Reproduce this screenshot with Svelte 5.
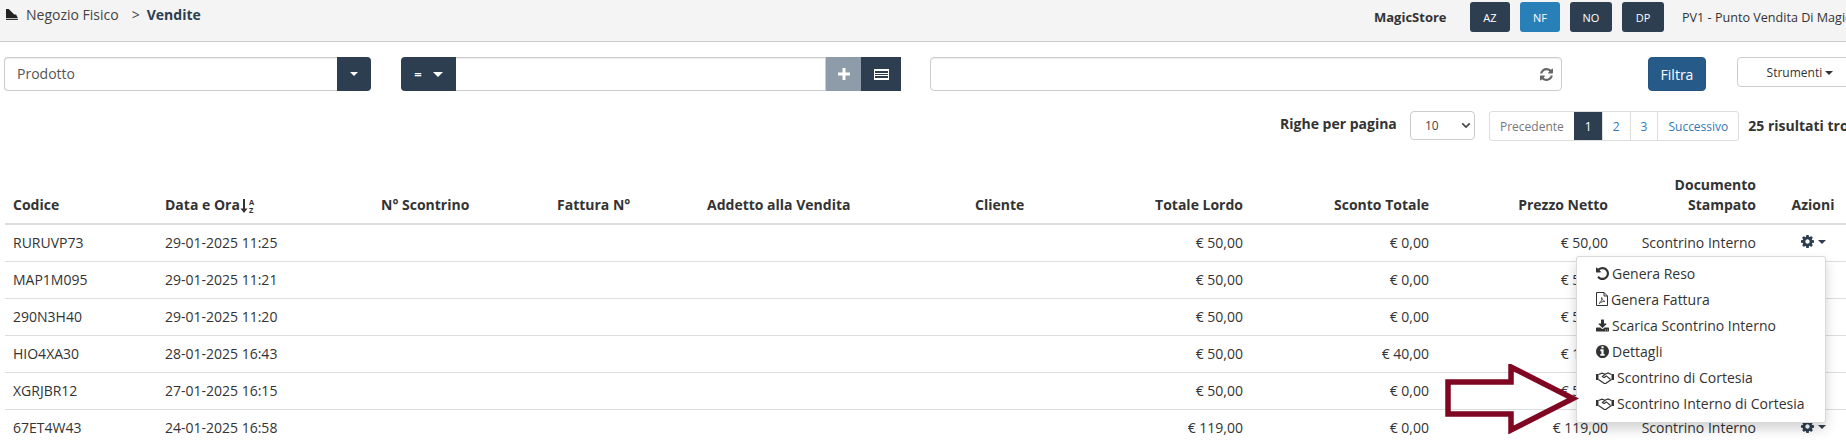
<script>
  const rows = [
    { code: 'RURUVP73', date: '29-01-2025 11:25', gross: '€ 50,00', discount: '€ 0,00', net: '€ 50,00' },
    { code: 'MAP1M095', date: '29-01-2025 11:21', gross: '€ 50,00', discount: '€ 0,00', net: '€ 50,00' },
    { code: '290N3H40', date: '29-01-2025 11:20', gross: '€ 50,00', discount: '€ 0,00', net: '€ 50,00' },
    { code: 'HIO4XA30', date: '28-01-2025 16:43', gross: '€ 50,00', discount: '€ 40,00', net: '€ 10,00' },
    { code: 'XGRJBR12', date: '27-01-2025 16:15', gross: '€ 50,00', discount: '€ 0,00', net: '€ 50,00' },
    { code: '67ET4W43', date: '24-01-2025 16:58', gross: '€ 119,00', discount: '€ 0,00', net: '€ 119,00' }
  ];

  const stores = [
    { label: 'AZ', active: false },
    { label: 'NF', active: true },
    { label: 'NO', active: false },
    { label: 'DP', active: false }
  ];
</script>

{#snippet handshake()}
  <svg class="mi wide" viewBox="0 0 18 13">
    <path d="M0 3h2.500v6H0zM15.500 3H18v6h-2.500z" fill="#333" stroke="none"/>
    <path d="M2.500 3.500 6 2.200l3 1 3-1.200 3.500 1.500M2.500 8.500l5.500 3.700q1 .7 2 0l5.500-3.700M9.500 3 6.300 5.500q1.200 1.700 3 .2l1-.8 4 3.300" fill="none" stroke="#333" stroke-width="1.200"/>
  </svg>
{/snippet}

<div class="page">
  <header class="topbar">
    <div class="crumbs">
      <svg class="crumb-icon" viewBox="0 0 14 12"><path d="M1 0h3l6 6h2l2 4H1z"/><rect x="1" y="11" width="13" height="1"/></svg>
      <span>Negozio Fisico</span>
      <span class="sep">&gt;</span>
      <strong>Vendite</strong>
    </div>
    <div class="stores">
      <strong class="shop">MagicStore</strong>
      {#each stores as store}
        <span class="store" class:active={store.active}>{store.label}</span>
      {/each}
      <span class="point">PV1 - Punto Vendita Di MagicStore</span>
    </div>
  </header>

  <section class="filters">
    <div class="group product">
      <span class="field">Prodotto</span>
      <span class="dark-btn caret-btn"><i class="caret"></i></span>
    </div>
    <div class="group value">
      <span class="dark-btn op"><b>=</b><i class="caret big"></i></span>
      <span class="field"></span>
      <span class="plus">
        <svg viewBox="0 0 12 12"><path d="M4.500 0h3v4.500H12v3H7.500V12h-3V7.500H0v-3h4.500z"/></svg>
      </span>
      <span class="dark-btn list">
        <svg viewBox="0 0 15 11"><rect width="15" height="11" fill="#fff"/><rect x="1" y="2" width="13" height="2" fill="#2c3e50"/><rect x="1" y="5" width="13" height="1" fill="#2c3e50"/><rect x="1" y="7" width="13" height="2" fill="#2c3e50"/></svg>
      </span>
    </div>
    <div class="search">
      <svg viewBox="0 0 1536 1536"><path d="M1511 928q0 5-1 7-64 268-268 434.500T764 1536q-146 0-282.500-55T238 1324l-129 129q-19 19-45 19t-45-19-19-45V960q0-26 19-45t45-19h448q26 0 45 19t19 45-19 45l-137 137q71 66 161 102t187 36q134 0 250-65t186-179q11-17 53-117 8-23 30-23h192q13 0 22.500 9.500t9.500 22.500zm25-800v448q0 26-19 45t-45 19h-448q-26 0-45-19t-19-45 19-45l138-138Q969 256 768 256q-134 0-250 65T332 500q-11 17-53 117-8 23-30 23H50q-13 0-22.500-9.500T18 608v-7q65-268 270-434.500T768 0q146 0 284 55.500T1297 212l130-129q19-19 45-19t45 19 19 45z"/></svg>
    </div>
    <button class="filter-btn">Filtra</button>
    <button class="tools-btn">Strumenti <i class="caret small"></i></button>
  </section>

  <section class="paging">
    <strong class="per-page">Righe per pagina</strong>
    <span class="page-size">10
      <svg viewBox="0 0 12 8"><path d="M1.500 1.500 6 6l4.500-4.500" fill="none" stroke="#444" stroke-width="2"/></svg>
    </span>
    <nav class="pager">
      <span class="prev">Precedente</span>
      <span class="current">1</span>
      <span>2</span>
      <span>3</span>
      <span>Successivo</span>
    </nav>
    <strong class="count">25 risultati trovati</strong>
  </section>

  <table>
    <colgroup>
      <col style="width:152px" /><col style="width:216px" /><col style="width:176px" /><col style="width:150px" />
      <col style="width:268px" /><col style="width:100px" /><col style="width:184px" /><col style="width:186px" />
      <col style="width:179px" /><col style="width:148px" /><col style="width:98px" />
    </colgroup>
    <thead>
      <tr>
        <th>Codice</th>
        <th>
          <span class="sorted">Data e Ora<svg viewBox="0 0 17 15"><path d="M3 1h2v9.500h2.500L4 15 .5 10.500H3z" fill="#333"/><text x="9" y="6.500" class="az">A</text><text x="9" y="14.500" class="az">Z</text></svg></span>
        </th>
        <th>N° Scontrino</th>
        <th>Fattura N°</th>
        <th>Addetto alla Vendita</th>
        <th>Cliente</th>
        <th class="num">Totale Lordo</th>
        <th class="num">Sconto Totale</th>
        <th class="num">Prezzo Netto</th>
        <th class="num">Documento<br />Stampato</th>
        <th class="center">Azioni</th>
      </tr>
    </thead>
    <tbody>
      {#each rows as row}
        <tr>
          <td>{row.code}</td>
          <td>{row.date}</td>
          <td></td>
          <td></td>
          <td></td>
          <td></td>
          <td class="num">{row.gross}</td>
          <td class="num">{row.discount}</td>
          <td class="num">{row.net}</td>
          <td class="num">Scontrino Interno</td>
          <td class="center">
            <span class="actions">
              <svg class="gear" viewBox="0 0 1536 1536"><path d="M1024 768q0-106-75-181t-181-75-181 75-75 181 75 181 181 75 181-75 75-181zm512-109v222q0 12-8 23t-20 13l-185 28q-19 54-39 91 35 50 107 138 10 12 10 25t-9 23q-27 37-99 108t-94 71q-12 0-26-9l-138-108q-44 23-91 38-16 136-29 186-7 28-36 28H657q-14 0-24.500-8.500T621 1506l-28-184q-49-16-90-37l-141 107q-10 9-25 9-14 0-25-11-126-114-165-168-7-10-7-23 0-12 8-23 15-21 51-66.500t54-70.500q-27-50-41-99L29 913q-13-2-21-12.500T0 877V655q0-12 8-23t19-13l186-28q14-46 39-92-40-57-107-138-10-12-10-24 0-10 9-23 26-36 98.500-107.500T337 135q13 0 26 10l138 107q44-23 91-38 16-136 29-186 7-28 36-28h222q14 0 24.500 8.500T915 30l28 184q49 16 90 37l142-107q9-9 24-9 13 0 25 10 129 119 165 170 7 8 7 22 0 12-8 23-15 21-51 66.500t-54 70.500q26 50 41 98l183 28q13 2 21 12.500t8 23.500z"/></svg>
              <i class="caret"></i>
            </span>
          </td>
        </tr>
      {/each}
    </tbody>
  </table>

  <ul class="menu">
    <li>
      <svg class="mi" viewBox="0 0 1536 1536"><path d="M1536 768q0 156-61 298t-164 245-245 164-298 61q-172 0-327-72.500T177 1259q-7-10-6.500-22.500T179 1216l137-138q10-9 25-9 16 2 23 12 73 95 179 147t225 52q104 0 198.500-40.500T1130 1130t109.500-163.500T1280 768t-40.500-198.500T1130 406 966.500 296.500 768 256q-98 0-188 35.500T420 393l137 138q31 30 14 69-17 40-59 40H64q-26 0-45-19T0 576V128q0-42 40-59 39-17 69 14l130 129Q346 111 483.500 55.500T768 0q156 0 298 61t245 164 164 245 61 298z"/></svg>
      Genera Reso
    </li>
    <li>
      <svg class="mi pdf" viewBox="0 0 12 14"><path d="M.5.500h7.500l3.500 3.500v9.500H.5z M8 .500v3.500h3.500" fill="none" stroke="#333" stroke-width="1"/><path d="M3 11.500c2-1 3-4 2.700-6 .5 2.500 1.500 3.500 3.300 4-2-.2-4 .5-6 2z" fill="none" stroke="#333" stroke-width=".8"/></svg>
      Genera Fattura
    </li>
    <li>
      <svg class="mi" viewBox="0 0 1664 1536"><path d="M1280 1344q0-26-19-45t-45-19-45 19-19 45 19 45 45 19 45-19 19-45zm256 0q0-26-19-45t-45-19-45 19-19 45 19 45 45 19 45-19 19-45zm128-224v320q0 40-28 68t-68 28H96q-40 0-68-28t-28-68v-320q0-40 28-68t68-28h465l135 136q58 56 136 56t136-56l136-136h464q40 0 68 28t28 68zm-325-569q17 41-14 70l-448 448q-18 19-45 19t-45-19L339 621q-31-29-14-70 17-39 59-39h256V64q0-26 19-45t45-19h256q26 0 45 19t19 45v448h256q42 0 59 39z"/></svg>
      Scarica Scontrino Interno
    </li>
    <li>
      <svg class="mi" viewBox="0 0 1536 1536"><path d="M1024 1248v-160q0-14-9-23t-23-9h-96V544q0-14-9-23t-23-9H544q-14 0-23 9t-9 23v160q0 14 9 23t23 9h96v320h-96q-14 0-23 9t-9 23v160q0 14 9 23t23 9h448q14 0 23-9t9-23zM896 352V192q0-14-9-23t-23-9H672q-14 0-23 9t-9 23v160q0 14 9 23t23 9h192q14 0 23-9t9-23zm640 416q0 209-103 385.500T1153.500 1433 768 1536t-385.500-103T103 1153.500 0 768t103-385.500T382.500 103 768 0t385.500 103T1433 382.500 1536 768z"/></svg>
      Dettagli
    </li>
    <li>
      {@render handshake()}
      Scontrino di Cortesia
    </li>
    <li>
      {@render handshake()}
      Scontrino Interno di Cortesia
    </li>
  </ul>

  <svg class="arrow" viewBox="0 0 134 70" width="134" height="70">
    <path d="M3 18H66V3L128 34.500 66 66V50H3Z" fill="none" stroke="#7f0722" stroke-width="5.500"/>
  </svg>
</div>

<style>
  :global(body) {
    margin: 0;
    overflow: hidden;
    background: #fff;
  }

  .page {
    position: relative;
    width: 1900px;
    height: 443px;
    overflow: hidden;
    font-family: "Open Sans", "Noto Sans", sans-serif;
    font-size: 13px;
    color: #333;
  }

  .topbar {
    box-sizing: border-box;
    height: 42px;
    background: #f4f4f4;
    border-bottom: 1px solid #ccc;
    display: flex;
    align-items: flex-start;
    padding-left: 5px;
  }

  .crumbs {
    display: flex;
    align-items: center;
    height: 29px;
    width: 1369px;
    color: #444;
    font-size: 14px;
  }

  .crumb-icon {
    width: 13px;
    height: 11px;
    fill: #222;
    margin-right: 8px;
  }

  .crumbs strong {
    color: #2c3e50;
  }

  .sep {
    margin: 0 7px 0 13px;
  }

  .stores {
    display: flex;
    align-items: center;
    height: 30px;
    padding-top: 2px;
  }

  .shop {
    width: 96px;
    color: #333;
  }

  .store {
    box-sizing: border-box;
    width: 40px;
    height: 30px;
    margin-right: 10px;
    background: #2c3e50;
    color: #fff;
    border-radius: 3px;
    display: flex;
    align-items: center;
    justify-content: center;
    font-size: 11px;
  }

  .store:nth-of-type(3),
  .store:nth-of-type(4) {
    width: 42px;
  }

  .store.active {
    background: #2980b9;
  }

  .point {
    margin-left: 8px;
    white-space: nowrap;
    font-size: 12.600px;
  }

  .filters {
    display: flex;
    align-items: flex-start;
    padding: 15px 0 0 4px;
    box-sizing: border-box;
    height: 69px;
  }

  .group {
    display: flex;
    height: 34px;
  }

  .field {
    box-sizing: border-box;
    flex: 1;
    height: 34px;
    line-height: 32px;
    padding-left: 12px;
    border: 1px solid #ccc;
    box-shadow: inset 0 1px 1px rgba(0, 0, 0, 0.075);
    color: #555;
    font-size: 14px;
  }

  .product {
    width: 367px;
  }

  .product .field {
    border-radius: 4px 0 0 4px;
    border-right: 0;
  }

  .dark-btn {
    background: #2c3e50;
    display: flex;
    align-items: center;
    justify-content: center;
  }

  .caret-btn {
    width: 34px;
    border-radius: 0 4px 4px 0;
  }

  .caret {
    display: inline-block;
    width: 0;
    height: 0;
    border-top: 4px solid #fff;
    border-left: 4px solid transparent;
    border-right: 4px solid transparent;
  }

  .caret.big {
    border-width: 5px 5px 0;
    margin-left: 11px;
  }

  .caret.small {
    border-top-color: #333;
    vertical-align: middle;
    border-width: 4px 4px 0;
  }

  .value {
    width: 500px;
    margin-left: 30px;
  }

  .op {
    width: 55px;
    border-radius: 4px 0 0 4px;
    color: #fff;
  }

  .value .field {
    padding: 0;
    border-left: 0;
  }

  .plus {
    width: 35px;
    background: #8e9ba8;
    display: flex;
    align-items: center;
    justify-content: center;
  }

  .plus svg {
    width: 12px;
    height: 12px;
    fill: #fff;
  }

  .list {
    width: 40px;
  }

  .list svg {
    width: 15px;
    height: 11px;
  }

  .search {
    box-sizing: border-box;
    width: 632px;
    height: 34px;
    margin-left: 29px;
    border: 1px solid #ccc;
    border-radius: 4px;
    box-shadow: inset 0 1px 1px rgba(0, 0, 0, 0.075);
    display: flex;
    align-items: center;
    justify-content: flex-end;
    padding-right: 8px;
  }

  .search svg {
    width: 13px;
    height: 13px;
    fill: #666;
  }

  .filter-btn {
    width: 58px;
    height: 34px;
    margin-left: 86px;
    background: #265a88;
    border: 1px solid #245580;
    border-radius: 4px;
    color: #fff;
    font: 14px "Open Sans", sans-serif;
    padding: 0;
  }

  .tools-btn {
    width: 130px;
    height: 30px;
    margin-left: 31px;
    background: #fff;
    border: 1px solid #ccc;
    border-radius: 4px;
    color: #333;
    font: 12px "Open Sans", sans-serif;
    padding: 0 4px 0 0;
  }

  .paging {
    display: flex;
    align-items: flex-start;
    height: 112px;
    box-sizing: border-box;
    padding-left: 1280px;
  }

  .per-page {
    width: 130px;
    line-height: 26px;
    font-size: 14px;
    white-space: nowrap;
  }

  .page-size {
    box-sizing: border-box;
    width: 65px;
    height: 29px;
    border: 1px solid #ccc;
    border-radius: 4px;
    padding-left: 14px;
    line-height: 29px;
    font-size: 12px;
    color: #444;
    display: flex;
    justify-content: space-between;
    align-items: center;
    padding-right: 3px;
  }

  .page-size svg {
    width: 10px;
    height: 7px;
  }

  .pager {
    display: flex;
    height: 30px;
    margin-left: 14px;
    border: 1px solid #ddd;
    border-radius: 3px;
    box-sizing: border-box;
    font-size: 12px;
    color: #337ab7;
  }

  .pager span {
    display: flex;
    align-items: center;
    padding: 0 10px;
    border-left: 1px solid #ddd;
  }

  .pager .prev {
    border-left: 0;
    color: #777;
  }

  .pager .current {
    background: #2c3e50;
    color: #fff;
    border-color: #2c3e50;
  }

  .count {
    margin-left: 9px;
    line-height: 30px;
    white-space: nowrap;
    font-size: 14px;
  }

  table {
    position: absolute;
    left: 5px;
    top: 175px;
    width: 1857px;
    table-layout: fixed;
    border-collapse: collapse;
    font-size: 14px;
  }

  th {
    height: 48px;
    padding: 0 8px 8px;
    box-sizing: border-box;
    vertical-align: bottom;
    text-align: left;
    line-height: 20px;
    border-bottom: 2px solid #ddd;
    color: #333;
    white-space: nowrap;
  }

  td {
    height: 37px;
    padding: 0 8px;
    box-sizing: border-box;
    border-bottom: 1px solid #ddd;
    white-space: nowrap;
  }

  .num {
    text-align: right;
  }

  .center {
    text-align: center;
  }

  .sorted {
    display: inline-flex;
    align-items: center;
  }

  .sorted svg {
    width: 17px;
    height: 15px;
  }

  .az {
    font-size: 7.500px;
    font-weight: 700;
    fill: #333;
  }

  .actions {
    display: inline-flex;
    align-items: center;
    gap: 4px;
  }

  .gear {
    width: 13px;
    height: 13px;
    fill: #2c3e50;
  }

  .actions .caret {
    border-top-color: #2c3e50;
  }

  .menu {
    position: absolute;
    left: 1576px;
    top: 256px;
    box-sizing: border-box;
    width: 250px;
    height: 167px;
    margin: 0;
    padding: 3px 0;
    list-style: none;
    background: #fff;
    border: 1px solid rgba(0, 0, 0, 0.15);
    border-radius: 3px;
    box-shadow: 0 6px 12px rgba(0, 0, 0, 0.175);
    font-size: 14px;
    color: #333;
  }

  .menu li {
    display: flex;
    align-items: center;
    gap: 3px;
    height: 26px;
    padding-left: 19px;
    white-space: nowrap;
  }

  .mi {
    width: 13px;
    height: 13px;
    fill: #333;
  }

  .mi.pdf {
    width: 12px;
    height: 14px;
  }

  .mi.wide {
    width: 18px;
    height: 13px;
  }

  .arrow {
    position: absolute;
    left: 1445px;
    top: 364px;
  }
</style>
